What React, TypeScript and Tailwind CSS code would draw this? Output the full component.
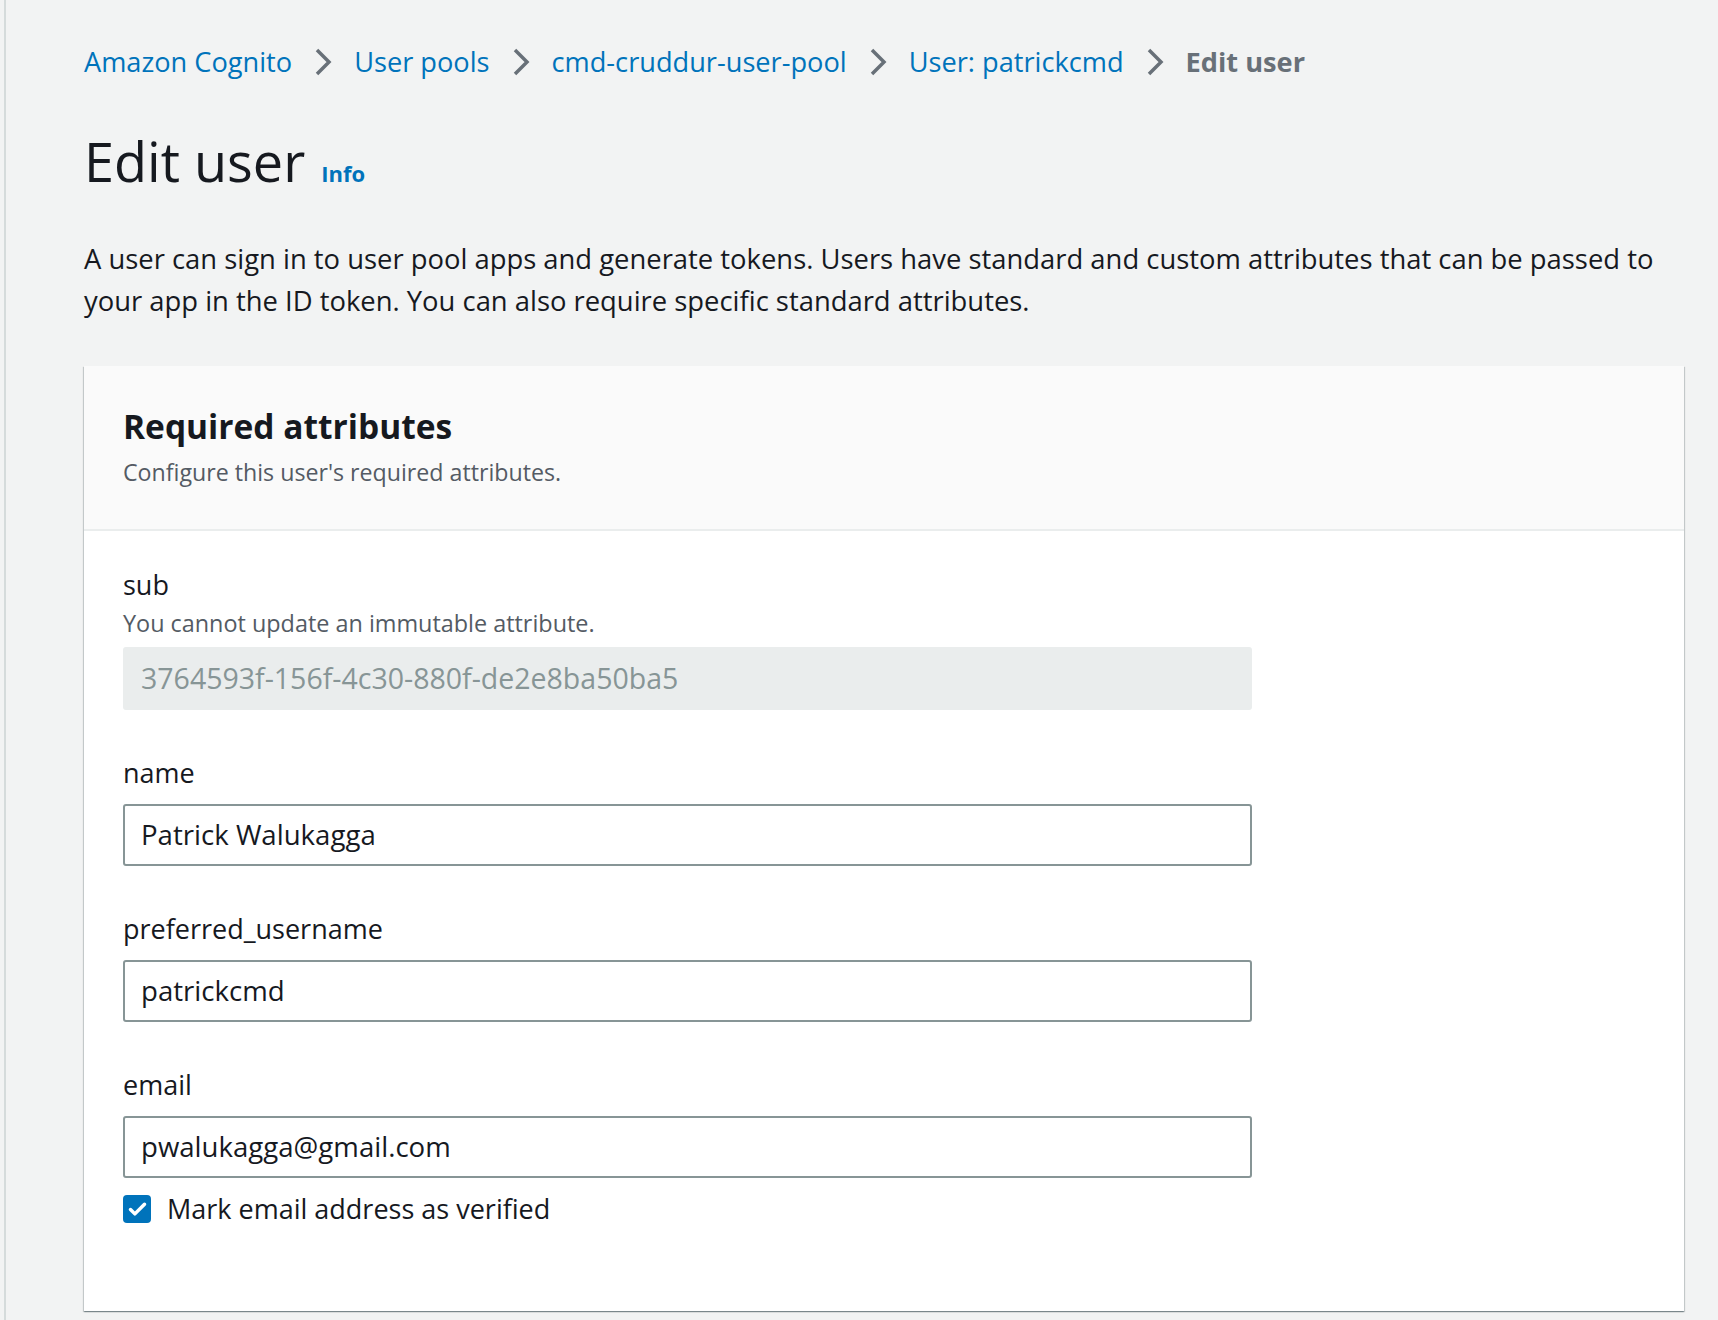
import { Check } from "lucide-react"

const crumbs = ["Amazon Cognito", "User pools", "cmd-cruddur-user-pool", "User: patrickcmd"]

function Chevron() {
  return (
    <svg width="18" height="30" viewBox="0 0 18 30" fill="none" className="shrink-0">
      <polyline points="3,3 15,15 3,27" stroke="#687078" strokeWidth="3.5" strokeLinejoin="miter" />
    </svg>
  )
}

function Field({
  label,
  hint,
  value,
  disabled,
}: {
  label: string
  hint?: string
  value: string
  disabled?: boolean
}) {
  return (
    <div className="flex flex-col">
      <label className="text-[27px] leading-[36px] text-[#16191f]">{label}</label>
      {hint && <p className="mt-[5px] text-[23.4px] leading-[30px] text-[#545b64]">{hint}</p>}
      {disabled ? (
        <div className="mt-[9px] flex h-[63px] w-[1129px] items-center rounded-[3px] bg-[#eaeded] px-[18px] text-[28.5px] text-[#879596]">
          {value}
        </div>
      ) : (
        <div className="mt-[13px] flex h-[62px] w-[1129px] items-center rounded-[3px] border-2 border-[#879596] bg-white px-[16px] text-[27.6px] text-[#16191f]">
          {value}
        </div>
      )}
    </div>
  )
}

export default function App() {
  return (
    <div className="min-h-[1320px] w-full bg-[#f2f3f3] font-['Open_Sans',sans-serif]">
      <div className="ml-[4px] min-h-[1320px] border-l-2 border-[#d5dbdb] pl-[78px] pr-[34px] pt-[44px]">
        {/* Breadcrumbs */}
        <nav className="flex items-center gap-[22px] text-[27.2px] leading-[36px]">
          {crumbs.map((c) => (
            <div key={c} className="flex items-center gap-[22px]">
              <span className="text-[#0073bb]">{c}</span>
              <Chevron />
            </div>
          ))}
          <span className="font-bold text-[#687078]">Edit user</span>
        </nav>

        {/* Header */}
        <div className="mt-[49px] flex items-baseline gap-[16px]">
          <h1 className="text-[54px] leading-[64px] text-[#16191f]">Edit user</h1>
          <span className="text-[22px] font-bold text-[#0073bb]">Info</span>
        </div>

        <p className="mt-[45px] text-[27.4px] leading-[42px] text-[#16191f]">
          A user can sign in to user pool apps and generate tokens. Users have standard and custom attributes that can be passed to your app in the ID token. You can also require specific standard attributes.
        </p>

        {/* Card */}
        <div className="mt-[44px] bg-white shadow-[0_1px_1px_0_rgba(0,28,36,0.3),1px_1px_1px_0_rgba(0,28,36,0.15),-1px_1px_1px_0_rgba(0,28,36,0.15)]">
          <div className="border-b-2 border-[#eaeded] bg-[#fafafa] px-[39px] pb-[42px] pt-[38px]">
            <h2 className="text-[33.5px] font-bold leading-[44px] text-[#16191f]">Required attributes</h2>
            <p className="mt-[9px] text-[23.2px] leading-[30px] text-[#545b64]">
              Configure this user's required attributes.
            </p>
          </div>

          <div className="flex flex-col gap-[45px] px-[39px] pb-[84px] pt-[36px]">
            <Field
              label="sub"
              hint="You cannot update an immutable attribute."
              value="3764593f-156f-4c30-880f-de2e8ba50ba5"
              disabled
            />
            <Field label="name" value="Patrick Walukagga" />
            <Field label="preferred_username" value="patrickcmd" />
            <div className="flex flex-col">
              <Field label="email" value="pwalukagga@gmail.com" />
              <div className="mt-[13px] flex items-center gap-[16px]">
                <span className="flex h-[28px] w-[28px] items-center justify-center rounded-[4px] bg-[#0073bb]">
                  <Check className="h-[21px] w-[21px] text-white" strokeWidth={4} />
                </span>
                <span className="text-[27px] leading-[36px] text-[#16191f]">Mark email address as verified</span>
              </div>
            </div>
          </div>
        </div>
      </div>
    </div>
  )
}
